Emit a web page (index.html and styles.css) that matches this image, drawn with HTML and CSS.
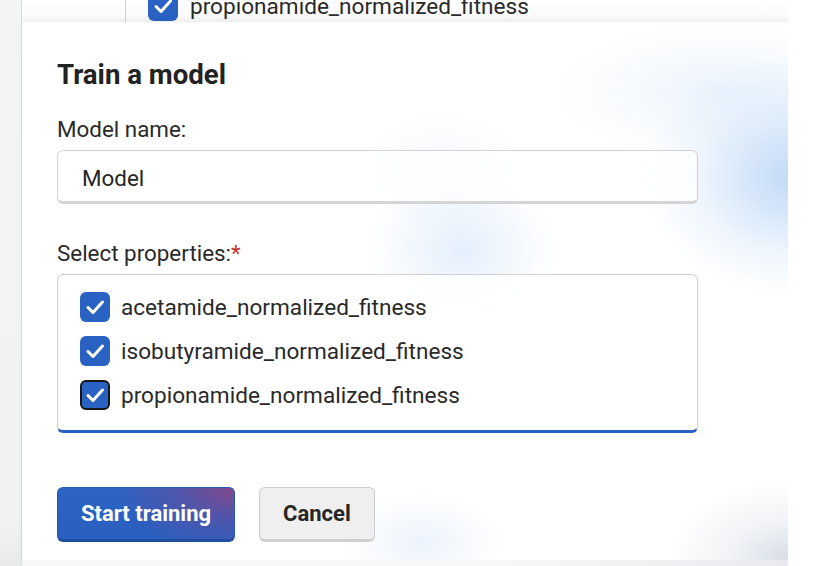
FILE: index.html
```html
<!DOCTYPE html>
<html lang="en">
<head>
<meta charset="utf-8">
<title>Train a model</title>
<link rel="stylesheet" href="styles.css">
</head>
<body>
<div class="page">
  <aside class="rail"></aside>
  <div class="center">
    <div class="peek">
      <div class="peek-line"></div>
      <div class="peek-row">
        <span class="cb"><svg viewBox="0 0 30 30" width="30" height="30"><path d="M8 15.5 L13 20.5 L22.5 10" /></svg></span>
        <span class="peek-text">propionamide_normalized_fitness</span>
      </div>
    </div>
    <section class="modal">
      <h1 class="title">Train a model</h1>
      <div class="field">
        <label class="label">Model name:</label>
        <div class="input">Model</div>
      </div>
      <div class="field field-props">
        <label class="label">Select properties:<span class="req">*</span></label>
        <div class="props">
          <div class="prop">
            <span class="cb"><svg viewBox="0 0 30 30" width="30" height="30"><path d="M8 15.5 L13 20.5 L22.5 10" /></svg></span>
            <span class="prop-text">acetamide_normalized_fitness</span>
          </div>
          <div class="prop">
            <span class="cb"><svg viewBox="0 0 30 30" width="30" height="30"><path d="M8 15.5 L13 20.5 L22.5 10" /></svg></span>
            <span class="prop-text">isobutyramide_normalized_fitness</span>
          </div>
          <div class="prop">
            <span class="cb cb-focus"><svg viewBox="0 0 30 30" width="30" height="30"><path d="M8 15.5 L13 20.5 L22.5 10" /></svg></span>
            <span class="prop-text">propionamide_normalized_fitness</span>
          </div>
        </div>
      </div>
      <div class="actions">
        <button class="btn btn-primary">Start training</button>
        <button class="btn btn-secondary">Cancel</button>
      </div>
    </section>
    <div class="foot"></div>
  </div>
  <div class="gutter"></div>
</div>
</body>
</html>
```

FILE: styles.css
```css
* { box-sizing: border-box; }
html, body { margin: 0; padding: 0; }
body {
  width: 814px;
  height: 566px;
  overflow: hidden;
  background: #ffffff;
  font-family: Roboto, "Noto Sans", "Liberation Sans", sans-serif;
  color: #262626;
}
.page {
  display: flex;
  width: 814px;
  height: 566px;
}
.rail {
  width: 22px;
  flex: none;
  background: linear-gradient(180deg, #f3f4f4 0%, #f1f2f2 92%, #e9ebeb 100%);
  border-right: 1px solid #dcdddd;
}
.center {
  width: 766px;
  flex: none;
  display: flex;
  flex-direction: column;
}
.gutter {
  flex: 1;
  background: #ffffff;
}
.peek {
  height: 22px;
  flex: none;
  display: flex;
  overflow: hidden;
  background: linear-gradient(180deg, #ffffff 0%, #f8f8f8 100%);
}
.peek-line {
  width: 1px;
  margin-left: 103px;
  background: #d2d2d2;
}
.peek-row {
  margin-left: 22px;
  align-self: flex-end;
  display: flex;
  align-items: flex-end;
  gap: 12px;
  padding-bottom: 1px;
  font-size: 22.6px;
  line-height: 28px;
}
.peek-text { color: #2a2a2a; }
.cb {
  width: 30px;
  height: 30px;
  flex: none;
  display: block;
  border-radius: 6px;
  background: #2a62c3;
}
.cb svg { display: block; }
.cb path {
  fill: none;
  stroke: #ffffff;
  stroke-width: 3;
  stroke-linecap: round;
  stroke-linejoin: round;
}
.cb-focus {
  border: 2px solid #161616;
}
.cb-focus svg { margin: -2px; }
.modal {
  flex: none;
  height: 538px;
  padding: 36px 90px 0 35px;
  box-shadow: 0 -2px 5px rgba(0, 0, 0, 0.06);
  background:
    radial-gradient(ellipse 150px 120px at 770px 155px, rgba(190, 216, 247, 0.95) 0%, rgba(196, 220, 248, 0.7) 30%, rgba(205, 226, 249, 0.3) 65%, rgba(210, 228, 250, 0) 100%),
    radial-gradient(ellipse 170px 70px at 700px 70px, rgba(215, 231, 250, 0.5) 0%, rgba(215, 231, 250, 0.2) 55%, rgba(215, 231, 250, 0) 100%),
    radial-gradient(ellipse 95px 80px at 440px 228px, rgba(210, 228, 250, 0.6) 0%, rgba(212, 229, 250, 0.35) 40%, rgba(215, 230, 250, 0) 100%),
    radial-gradient(ellipse 90px 60px at 420px 150px, rgba(225, 236, 251, 0.4) 0%, rgba(225, 236, 251, 0) 100%),
    radial-gradient(ellipse 80px 50px at 400px 520px, rgba(215, 229, 249, 0.45) 0%, rgba(215, 229, 249, 0) 100%),
    radial-gradient(ellipse 120px 80px at 767px 538px, rgba(208, 215, 226, 0.85) 0%, rgba(215, 221, 231, 0.35) 50%, rgba(220, 225, 234, 0) 100%),
    #ffffff;
}
.title {
  margin: 0 0 25px 0;
  font-size: 27.6px;
  line-height: 33px;
  font-weight: 700;
  color: #222222;
}
.field {
  display: flex;
  flex-direction: column;
}
.field-props { margin-top: 36px; }
.label {
  font-size: 22.4px;
  line-height: 26px;
  margin-bottom: 8px;
  color: #2a2a2a;
}
.req { color: #c8322c; }
.input {
  height: 54px;
  border: 1px solid #d3d3d3;
  border-bottom: 3px solid #d4d4d4;
  border-radius: 6px;
  padding: 14px 24px 10px 24px;
  font-size: 22.4px;
  line-height: 26px;
  color: #262626;
  background: rgba(255, 255, 255, 0.7);
}
.props {
  display: flex;
  flex-direction: column;
  gap: 14px;
  border: 1px solid #d0d0d0;
  border-bottom: 3px solid #2a62c3;
  border-radius: 6px;
  padding: 17px 22px 20px 22px;
  background: rgba(255, 255, 255, 0.85);
}
.prop {
  display: flex;
  align-items: center;
  gap: 11px;
  height: 30px;
}
.prop-text {
  font-size: 22.6px;
  line-height: 26px;
  padding-top: 2px;
  color: #2a2a2a;
}
.actions {
  display: flex;
  gap: 24px;
  margin-top: 54px;
}
.btn {
  height: 55px;
  padding: 0 23px;
  border-radius: 6px;
  font-family: Roboto, "Noto Sans", "Liberation Sans", sans-serif;
  font-size: 22px;
  line-height: 26px;
  font-weight: 700;
  cursor: pointer;
}
.btn-primary {
  color: #ffffff;
  border: 1px solid #2758b5;
  border-bottom: 3px solid #214e9f;
  background:
    radial-gradient(ellipse 120px 65px at 100% 0%, rgba(135, 70, 135, 0.95) 0%, rgba(110, 75, 150, 0.55) 45%, rgba(60, 95, 190, 0) 100%),
    linear-gradient(180deg, #2c63c4 0%, #2a5fbf 100%);
}
.btn-secondary {
  color: #262626;
  border: 1px solid #cdcdcd;
  border-bottom: 3px solid #cfcfcf;
  background: #efefef;
}
.foot {
  flex: 1;
  background: linear-gradient(90deg, #f7f7f7 0%, #f8f8f8 60%, #e8eaee 100%);
}
```
